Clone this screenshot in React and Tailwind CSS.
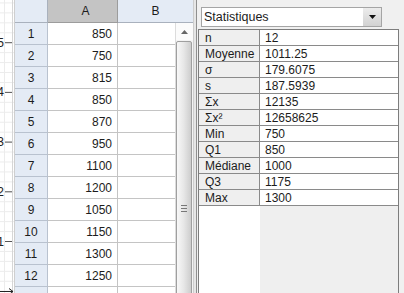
import React from 'react';

const values = [850, 750, 815, 850, 870, 950, 1100, 1200, 1050, 1150, 1300, 1250];

const stats = [
    ['n', '12'],
    ['Moyenne', '1011.25'],
    ['σ', '179.6075'],
    ['s', '187.5939'],
    ['Σx', '12135'],
    ['Σx²', '12658625'],
    ['Min', '750'],
    ['Q1', '850'],
    ['Médiane', '1000'],
    ['Q3', '1175'],
    ['Max', '1300'],
];

function GraphStrip() {
    const minor = [];
    for (let y = 291.2; y > -10; y -= 9.94) minor.push(y);
    const ticks = [
        { y: 42.7, label: '5' },
        { y: 92.4, label: '4' },
        { y: 142.1, label: '3' },
        { y: 191.8, label: '2' },
        { y: 241.5, label: '1' },
    ];
    return (
        <svg width="14" height="293" className="shrink-0 bg-white">
            {minor.map((y, i) => (
                <line key={i} x1="0" x2="14" y1={y} y2={y} stroke="#ececec" strokeWidth="1" />
            ))}
            <line x1="4.5" x2="4.5" y1="0" y2="293" stroke="#ececec" />
            <line x1="12.5" x2="12.5" y1="0" y2="293" stroke="#d6d6d6" />
            {ticks.map(t => (
                <g key={t.label}>
                    <line x1="5" x2="12" y1={t.y} y2={t.y} stroke="#555" />
                    <text x="4" y={t.y + 4} textAnchor="end" fontSize="12" fill="#222" fontFamily="Liberation Sans, Arial, sans-serif">{t.label}</text>
                </g>
            ))}
            <line x1="0" x2="13" y1="291.5" y2="291.5" stroke="#222" strokeWidth="1" />
            <path d="M9 288.5 L13 291.5 L9 294.5" fill="none" stroke="#222" strokeWidth="1" />
        </svg>
    );
}

function Spreadsheet() {
    return (
        <div className="flex w-[179px] shrink-0 flex-col border-l border-[#cfcfcf] bg-white">
            {/* column headers */}
            <div className="flex h-[23px] shrink-0">
                <div className="w-[33px] border-r border-b border-[#a9b1bd] bg-[#e4ebf5]" />
                <div className="flex w-[70px] items-center justify-center border-r border-b border-[#9c9c9c] bg-[#c4c4c4] pl-[6px]">A</div>
                <div className="flex flex-1 items-center justify-center border-b border-[#a9b1bd] bg-[#e4ebf5]">B</div>
            </div>

            <div className="flex flex-1 overflow-hidden">
                <div className="flex w-[160px] flex-col">
                    {[...values, null].map((v, i) => (
                        <div key={i} className="flex h-[22px] shrink-0">
                            <div className="flex w-[33px] items-center justify-center border-r border-b border-[#b9c2cf] bg-[#e4ebf5]">
                                {v !== null ? i + 1 : ''}
                            </div>
                            <div className="flex w-[70px] items-center justify-end border-r border-b border-[#c4c4c4] pr-[5px]">
                                {v}
                            </div>
                            <div className="flex-1 border-b border-[#c4c4c4]" />
                        </div>
                    ))}
                </div>

                {/* vertical scrollbar */}
                <div className="flex w-[18px] flex-col border-l border-[#dcdcdc] bg-[#f3f3f3]">
                    <div className="flex h-[17px] shrink-0 items-center justify-center bg-[#fbfbfb]">
                        <svg width="7" height="4"><path d="M0 4 L3.5 0 L7 4 Z" fill="#666" /></svg>
                    </div>
                    <div className="mt-[1px] ml-[0px] flex h-[334px] w-[16px] shrink-0 items-center justify-center rounded-[2px] border border-[#9f9f9f] bg-gradient-to-r from-[#f8f8f8] via-[#e6e6e6] to-[#cdcdcd]">
                        <div className="flex flex-col gap-[2px]">
                            <div className="h-[1px] w-[6px] bg-[#777]" />
                            <div className="h-[1px] w-[6px] bg-[#777]" />
                            <div className="h-[1px] w-[6px] bg-[#777]" />
                        </div>
                    </div>
                </div>
            </div>
        </div>
    );
}

function StatsPanel() {
    return (
        <div className="flex flex-1 flex-col bg-[#f0f0f0] pt-[7px] pr-[5px] pl-[1px]">
            <div className="ml-[3px] flex h-[20px] w-[181px] shrink-0 border border-[#a5a5a5] bg-white">
                <div className="flex flex-1 items-center pl-[2px] text-[12.5px]">Statistiques</div>
                <div className="flex w-[18px] items-center justify-center bg-gradient-to-b from-[#ececec] to-[#d2d2d2]">
                    <svg width="7" height="4"><path d="M0 0 L7 0 L3.5 4 Z" fill="#111" /></svg>
                </div>
            </div>

            <div className="mt-[2px] flex flex-1 flex-col border-t border-l border-r border-[#7d7d7d]">
                {stats.map(([label, value]) => (
                    <div key={label} className="flex h-[16px] shrink-0 border-b border-[#8a8a8a]">
                        <div className="flex w-[61px] items-center border-r border-[#8a8a8a] bg-[#efefef] pl-[6px]">{label}</div>
                        <div className="flex flex-1 items-center bg-white pl-[5px]">{value}</div>
                    </div>
                ))}
                <div className="flex flex-1">
                    <div className="w-[61px] bg-white" />
                    <div className="flex-1 bg-[#efefef]" />
                </div>
            </div>
        </div>
    );
}

export default function App() {
    return (
        <div className="flex h-[293px] w-[404px] overflow-hidden bg-[#f0f0f0] font-['Liberation_Sans',Arial,sans-serif] text-[12px] leading-none text-[#1c1c1c]">
            <GraphStrip />
            <Spreadsheet />
            <div className="w-[4px] shrink-0 border-l border-r border-l-[#cdcdcd] border-r-[#8f8f8f] bg-[#e6e6e6]" />
            <StatsPanel />
        </div>
    );
}
